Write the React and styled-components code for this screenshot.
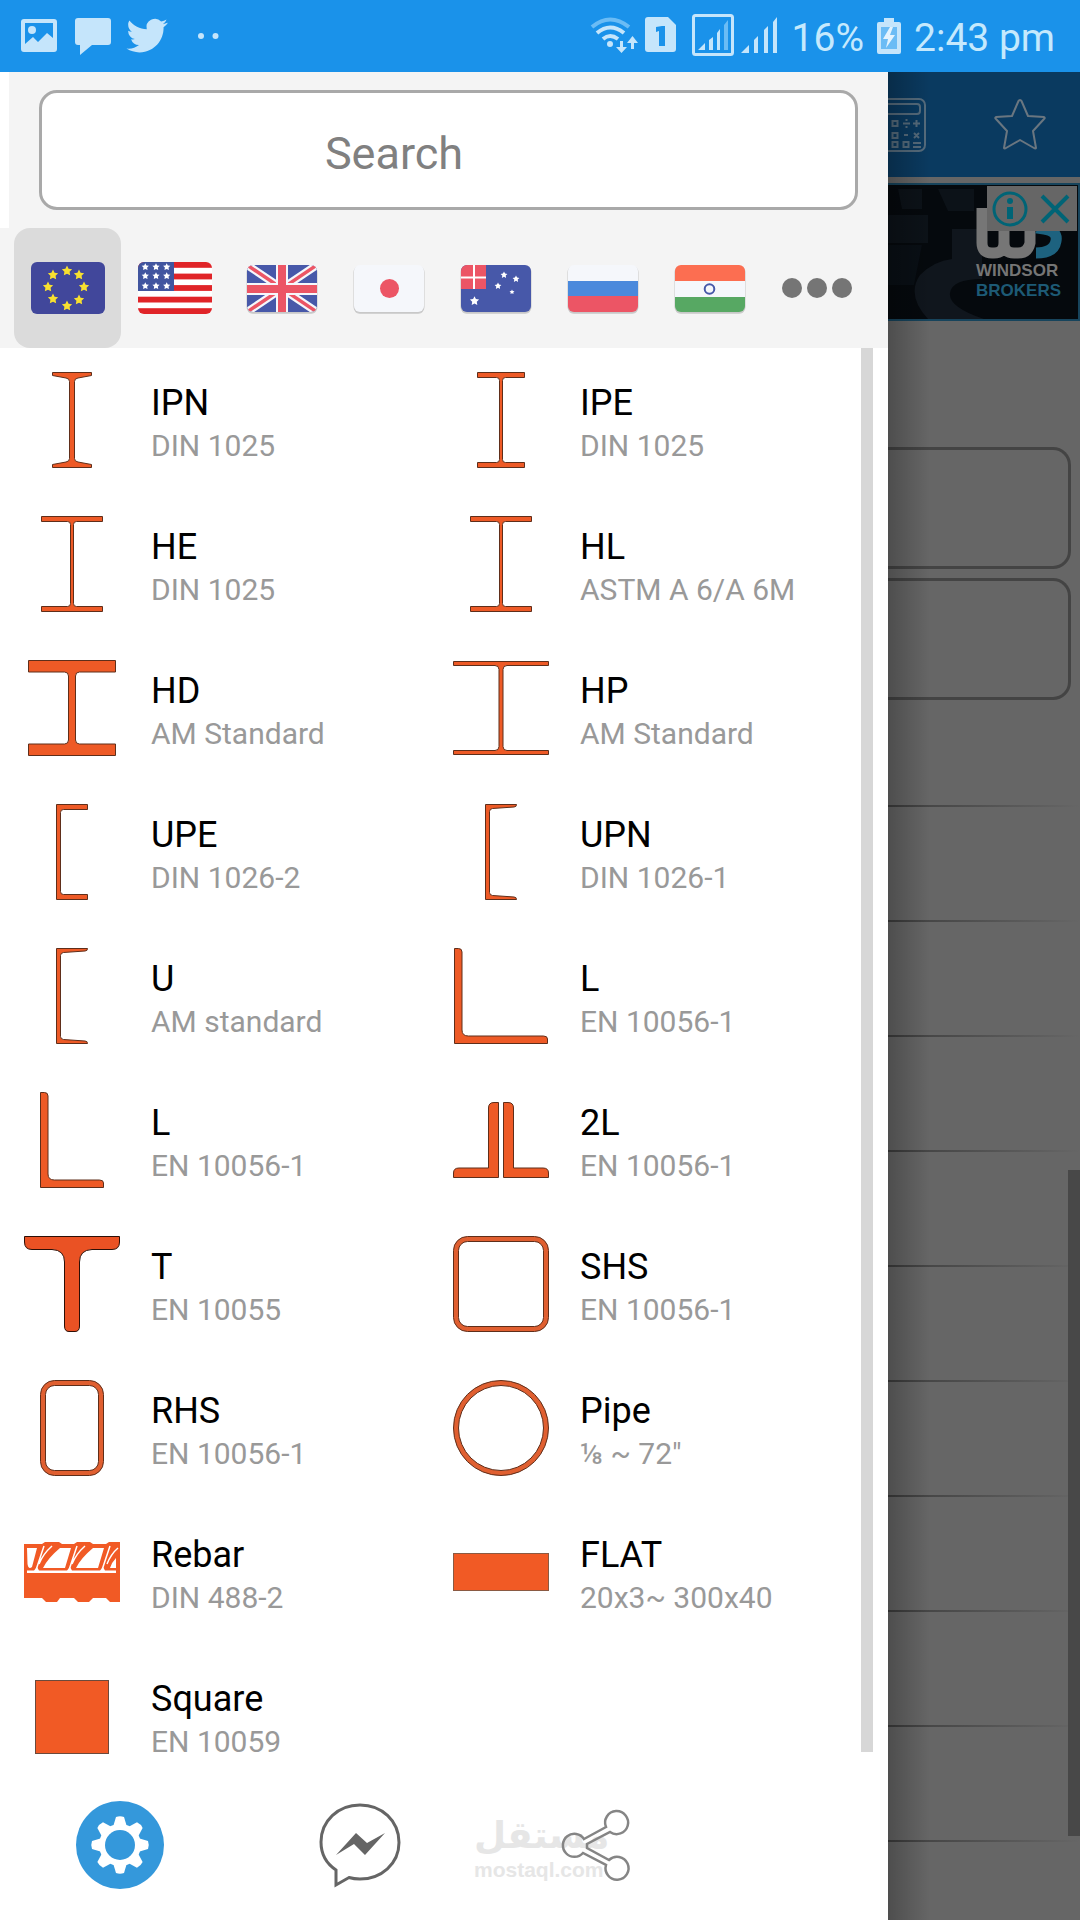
import React, { useState } from 'react';
import styled, { createGlobalStyle } from 'styled-components';

const GlobalStyle = createGlobalStyle`
  * {
    box-sizing: border-box;
  }

  body {
    margin: 0;
    background: #ffffff;
    font-family: Roboto, 'Noto Sans', sans-serif;
  }

  button {
    padding: 0;
    border: 0;
    background: none;
    font: inherit;
    cursor: pointer;
  }

  svg {
    display: block;
    flex-shrink: 0;
  }
`;

const starPoints = (cx, cy, r) =>
  Array.from({ length: 10 }, (_, i) => {
    const radius = i % 2 ? r * 0.5 : r;
    const angle = (Math.PI / 5) * i - Math.PI / 2;
    return `${(cx + radius * Math.cos(angle)).toFixed(2)},${(cy + radius * Math.sin(angle)).toFixed(2)}`;
  }).join(' ');

const Stars = ({ items, fill }) =>
  items.map(([x, y, r]) => <polygon key={`${x}-${y}`} points={starPoints(x, y, r)} fill={fill} />);

/* ---------- flags ---------- */

const EuFlag = () => (
  <svg width="74" height="52" viewBox="0 0 74 52">
    <rect width="74" height="52" rx="6" fill="#41479b" />
    <Stars
      fill="#f8e02f"
      items={[
        [36, 9, 5.4],
        [22, 13, 5.4],
        [48, 13, 5.4],
        [17, 25, 5.4],
        [53, 25, 5.4],
        [22, 37, 5.4],
        [48, 38, 5.4],
        [36, 44, 5.4],
      ]}
    />
  </svg>
);

const UsFlag = () => (
  <svg width="74" height="52" viewBox="0 0 74 52">
    <clipPath id="us">
      <rect width="74" height="52" rx="6" />
    </clipPath>
    <g clipPath="url(#us)">
      <rect width="74" height="52" fill="#ffffff" />
      {[0, 11.6, 23.1, 34.7, 46.2].map((y) => (
        <rect key={y} y={y} width="74" height="5.8" fill="#e02428" />
      ))}
      <rect width="36" height="29" fill="#41559f" />
      <Stars
        fill="#ffffff"
        items={[5, 14, 24].flatMap((y) => [7.3, 18, 28.7].map((x) => [x, y, 3.8]))}
      />
    </g>
  </svg>
);

// 70x47 flags share the same rounded body with a soft drop under it
const SmallFlag = ({ id, children }) => (
  <svg width="74" height="52" viewBox="-2 -3 74 52">
    <clipPath id={id}>
      <rect width="70" height="47" rx="6" />
    </clipPath>
    <rect x="0" y="2" width="70" height="47" rx="6" fill="#d2d2d2" />
    <rect x="-0.5" y="1" width="71" height="47" rx="6" fill="#c8c8c8" />
    <g clipPath={`url(#${id})`}>{children}</g>
  </svg>
);

const UkFlag = () => (
  <SmallFlag id="uk">
    <rect width="70" height="47" fill="#4758a9" />
    <path d="M0 0l70 47M70 0L0 47" stroke="#f5f7fb" strokeWidth="8" />
    <path d="M0 0l70 47M70 0L0 47" stroke="#ec5565" strokeWidth="3.5" />
    <path d="M35 0v47M0 24h70" stroke="#f5f7fb" strokeWidth="12" />
    <path d="M35 0v47M0 24h70" stroke="#ec5565" strokeWidth="8" />
  </SmallFlag>
);

const JpFlag = () => (
  <SmallFlag id="jp">
    <rect width="70" height="47" fill="#f5f7fb" />
    <circle cx="35.5" cy="23.5" r="9.5" fill="#ec5565" />
  </SmallFlag>
);

const AuFlag = () => (
  <SmallFlag id="au">
    <rect width="70" height="47" fill="#4758a9" />
    <rect width="25" height="24" fill="#ec5565" />
    <path d="M13 0v24M0 12.5h25" stroke="#ffffff" strokeWidth="2" />
    <Stars
      fill="#ffffff"
      items={[
        [43, 10, 3.6],
        [55, 14, 3.6],
        [37, 21, 3.6],
        [51, 27, 2.6],
        [13.5, 36, 4.8],
      ]}
    />
  </SmallFlag>
);

const RuFlag = () => (
  <SmallFlag id="ru">
    <rect width="70" height="16" fill="#f5f7fb" />
    <rect y="16" width="70" height="15" fill="#4a89dc" />
    <rect y="31" width="70" height="16" fill="#ec5565" />
  </SmallFlag>
);

const InFlag = () => (
  <SmallFlag id="in">
    <rect width="70" height="16" fill="#fc6e51" />
    <rect y="16" width="70" height="16" fill="#f5f7fb" />
    <rect y="32" width="70" height="15" fill="#57a863" />
    <circle cx="34.5" cy="24" r="4.8" fill="none" stroke="#4758a9" strokeWidth="2" />
  </SmallFlag>
);

const MoreDots = () => (
  <svg width="74" height="52" viewBox="0 0 74 52" fill="#757575">
    <circle cx="12" cy="26" r="10" />
    <circle cx="37" cy="26" r="10" />
    <circle cx="62" cy="26" r="10" />
  </svg>
);

/* ---------- steel sections, 96x96 ---------- */

const Section = ({ children, fill = '#ee5a26' }) => (
  <svg width="96" height="96" viewBox="0 0 96 96" fill={fill} stroke="#5f2e1a" strokeWidth="1">
    {children}
  </svg>
);

// symmetrical I profile: half width, flange thickness, half web, fillet
const beam = (hw, t, web, r, top = 0.5) => {
  const l = 48 - hw;
  const b = 96 - top;
  const f = top + t;
  const g = b - t;
  return `M${l} ${top}H${48 + hw}V${f}H${48 + web + r}Q${48 + web} ${f} ${48 + web} ${f + r}V${g - r}Q${48 + web} ${g} ${48 + web + r} ${g}H${48 + hw}V${b}H${l}V${g}H${48 - web - r}Q${48 - web} ${g} ${48 - web} ${g - r}V${f + r}Q${48 - web} ${f} ${48 - web - r} ${f}H${l}Z`;
};

const Beam = ({ size }) => (
  <Section>
    <path d={beam(...size)} />
  </Section>
);

const Ipn = () => (
  <Section>
    <path d="M28.500 .5H67.500V3.500L54 6Q50.500 6.500 50.500 9.500V86.500Q50.500 89.500 54 90L67.500 92.500V95.500H28.500V92.500L42 90Q45.500 89.500 45.500 86.500V9.500Q45.500 6.500 42 6L28.500 3.500Z" />
  </Section>
);

const Upe = () => (
  <Section>
    <path d="M32.500 .5H63.500V5.500H39.500Q36.500 5.500 36.500 8.500V87.500Q36.500 90.500 39.500 90.500H63.500V95.500H32.500Z" />
  </Section>
);

const Upn = () => (
  <Section>
    <path d="M32.500 .5H63.500Q63.500 3 61 3L39.500 4.500Q36.500 5 36.500 7.500V88.500Q36.500 91 39.500 91.500L61 93Q63.500 93 63.500 95.500H32.500Z" />
  </Section>
);

const Angle = ({ left = 1.5, right = 94.5 }) => (
  <Section>
    <path
      d={`M${left} .5H${left + 4}Q${left + 7.5} .5 ${left + 7.5} 4V82Q${left + 7.5} 88 ${left + 14} 88H${right - 4}Q${right} 88 ${right} 91V95.5H${left}Z`}
    />
  </Section>
);

const DoubleAngle = () => (
  <Section>
    <path d="M45.500 10.500H41Q35.500 10.500 35.500 16V76H6Q.5 76 .5 81V85.500H45.500Z" />
    <path d="M50.500 10.500H55Q60.500 10.500 60.500 16V76H90Q95.500 76 95.500 81V85.500H50.500Z" />
  </Section>
);

const Tee = () => (
  <Section fill="#ea5224">
    <path
      stroke="#2c0f06"
      d="M.5 .5H95.500V6Q95.500 13.500 88 13.500H68Q55.500 14 55.500 26V90Q55.500 95.500 51 95.500H45Q40.500 95.500 40.500 90V26Q40.500 14 28 13.500H8Q.5 13.500 .5 6Z"
    />
  </Section>
);

const Hollow = ({ x, width }) => (
  <Section fill="#e05f30">
    <rect x={x + 0.5} y=".5" width={width - 1} height="95" rx="14" />
    <rect x={x + 5.5} y="5.5" width={width - 11} height="85" rx="9" fill="#ffffff" />
  </Section>
);

const Pipe = () => (
  <Section fill="#e05f30">
    <circle cx="48" cy="48" r="47.500" />
    <circle cx="48" cy="48" r="42.500" fill="#ffffff" />
  </Section>
);

const Rebar = () => (
  <svg width="96" height="96" viewBox="0 0 96 96" fill="#f15a25">
    <path d="M0 20H18L21 18H35L38 20H50L53 18H66L69 20H82L85 18H96V78H86L82 74H69L65 78H54L50 74H36L33 78H22L18 74H0Z" />
    <path
      fill="#ffffff"
      d="M3 24H13L8 43Q4.500 46 3.500 40ZM36 24H47L41 44H19Q24 34 36 24ZM69 24H80L74 44H52Q57 34 69 24ZM92 34V44H86Q88 38 92 34Z"
    />
    <path
      fill="none"
      stroke="#ffffff"
      strokeWidth="1.500"
      d="M20 22L12 46M28 22Q19 30 15 40M53 22L45 46M61 22Q52 30 48 40M86 22L78 46M94 24Q87 30 83 40"
    />
    <path fill="#ffffff" d="M3 46.500H10L13 43L15 46.500H43L46 43L48 46.500H76L79 43L81 46.500H92V49H3Z" />
  </svg>
);

const Flat = () => (
  <Section fill="#f15a25">
    <rect x=".5" y="29.500" width="95" height="37" stroke="#8a5a43" />
  </Section>
);

const SquareBar = () => (
  <Section fill="#f15a25">
    <rect x="11.500" y="12.500" width="73" height="73" stroke="#6b4a3c" />
  </Section>
);

/* ---------- status bar drawings ---------- */

const NotificationIcons = () => (
  <svg width="200" height="40" viewBox="20 16 200 40" fill="#c5e5fb" role="img" aria-label="Notifications">
    <path
      fillRule="evenodd"
      d="M24 19H54Q57 19 57 22V49Q57 52 54 52H24Q21 52 21 49V22Q21 19 24 19ZM25 23V44L33 37L38 42L47 33L53 38V23Z"
    />
    <circle cx="32" cy="30" r="4" />
    <path d="M78 18H108Q111 18 111 21V42Q111 45 108 45H92L80 55V45H78Q75 45 75 42V21Q75 18 78 18Z" />
    <g transform="translate(126.500 15) scale(1.720)">
      <path d="M23.950 4.570a10 10 0 0 1-2.820.770 4.960 4.960 0 0 0 2.160-2.720c-.950.550-2 .950-3.130 1.180a4.920 4.920 0 0 0-8.380 4.480C7.690 8.090 4.070 6.130 1.640 3.160a4.820 4.820 0 0 0-.670 2.480c0 1.710.870 3.210 2.190 4.100a4.900 4.900 0 0 1-2.230-.620v.060a4.920 4.920 0 0 0 3.950 4.830 5 5 0 0 1-2.210.080 4.940 4.940 0 0 0 4.600 3.420A9.870 9.870 0 0 1 0 19.540a13.990 13.990 0 0 0 7.550 2.210c9.050 0 14-7.500 14-13.980 0-.210 0-.420-.020-.630a9.940 9.940 0 0 0 2.460-2.550z" />
    </g>
    <circle cx="201" cy="36" r="3" />
    <circle cx="215.500" cy="36" r="3" />
  </svg>
);

const SignalIcons = () => (
  <svg width="190" height="44" viewBox="591 14 190 44" fill="#c5e5fb" role="img" aria-label="Wi-Fi and signal">
    <g fill="none" strokeWidth="4">
      <path d="M594 27Q612 12 631 27" stroke="#6bbcf5" />
      <path d="M599 33Q612 22 626 33" stroke="#c5e5fb" />
      <path d="M605 39Q612 33 620 39" stroke="#c5e5fb" />
    </g>
    <circle cx="612" cy="44" r="3" />
    <path d="M622 41h3v6h4l-5.500 6l-5.500-6h4zM633 49h3v-6h4l-5.500-7l-5.500 7h4z" />
    <path d="M650 17H670L678 25V49Q678 52 675 52H650Q647 52 647 49V20Q647 17 650 17Z" />
    <path d="M658 27L664 26H667V46H661V31L658 32Z" fill="#1a92ea" />
    <rect x="695.500" y="15.500" width="39" height="39" rx="2" fill="none" stroke="#c5e5fb" strokeWidth="3" />
    <path d="M700 50L707 43V50ZM711 40L715 37V50H711ZM719 33L722 29V50H719Z" />
    <path d="M726 25L730 20V50H726Z" fill="#6bbcf5" />
    <path d="M743 53L751 45V53ZM756 40L760 36V53H756ZM766 30L770 26V53H766ZM775 22L779 17V53H775Z" />
  </svg>
);

const BatteryIcon = () => (
  <svg width="24" height="36" viewBox="0 0 24 36" role="img" aria-label="Battery charging">
    <path d="M7 0H17V4H22Q24 4 24 6V34Q24 36 22 36H2Q0 36 0 34V6Q0 4 2 4H7Z" fill="#c5e5fb" />
    <path d="M4 9H20V31H4Z" fill="#6bbcf5" />
    <path d="M13 9L6 21H11L9 30L18 17H13L16 9Z" fill="#e3f3fe" />
  </svg>
);

/* ---------- page behind the drawer ---------- */

const CalculatorIcon = () => (
  <svg width="54" height="54" viewBox="0 0 54 54" fill="none" stroke="#566c7d" strokeWidth="2">
    <rect x="1" y="1" width="52" height="52" rx="6" />
    <rect x="6" y="6" width="42" height="10" rx="3" />
    <path d="M20.500 23h5v5h-5zM20.500 35h5v5h-5zM20.500 44h5v5h-5zM31.500 44h5v5h-5zM31 25.500h7M41 25.500h7M44.500 22v7M32 37h4M42 35l5 5M47 35l-5 5M41 45h8M41 49h8M34.500 21v2M34.500 28v2" />
  </svg>
);

const StarIcon = () => (
  <svg width="52" height="52" viewBox="0 0 52 52" fill="none" stroke="#6a7680" strokeWidth="2" strokeLinejoin="round">
    <path d="M26 1Q27 1 27.500 2L34 17L50 18Q51.500 19 50 20L39 32L42 49Q41.500 50 40 49L26 41L12 49Q10.500 50 10 49L13 32L2 20Q.500 19 2 18L18 17L24.500 2Q25 1 26 1Z" />
  </svg>
);

const AdInfoIcon = () => (
  <svg width="36" height="36" viewBox="0 0 36 36">
    <circle cx="18" cy="18" r="16" fill="none" stroke="#006476" strokeWidth="3" />
    <path d="M15 16h6v12h-6z" fill="#006476" />
    <circle cx="18" cy="10" r="3" fill="#006476" />
  </svg>
);

const AdCloseIcon = () => (
  <svg width="36" height="36" viewBox="0 0 36 36">
    <path d="M5 5l26 26M31 5L5 31" stroke="#006476" strokeWidth="4" />
  </svg>
);

const AdPattern = () => (
  <svg width="100%" height="100%" viewBox="0 0 190 134" preserveAspectRatio="none">
    <rect width="190" height="134" fill="#05090d" />
    <path d="M10 4h24v20H14zM50 4h36v22H60zM0 30h40v28H0z" fill="#0c1218" />
    <path d="M64 44h30v50q-30 0-32 14t34 26H40q-22-24-8-44 14-14 32-16z" fill="#10161d" />
    <path d="M0 60h34l-8 40H0z" fill="#090f15" />
  </svg>
);

const BrandMark = () => (
  <svg width="86" height="56" viewBox="0 0 86 56" fill="none" strokeWidth="11">
    <path d="M6 3V38Q6 48 16 48H18Q28 48 28 38V14V38Q28 48 38 48H42Q52 48 54 38V14" stroke="#767676" />
    <path d="M60 4H80L68 24Q82 26 80 36Q78 48 60 48" stroke="#1d627f" />
  </svg>
);

/* ---------- bottom actions ---------- */

const GearIcon = () => (
  <svg width="88" height="88" viewBox="0 0 88 88">
    <circle cx="44" cy="44" r="44" fill="#3498db" />
    <g fill="#ffffff">
      {[0, 45, 90, 135, 180, 225, 270, 315].map((deg) => (
        <path key={deg} transform={`rotate(${deg} 44 44)`} d="M37 26L40 16Q44 14.500 48 16L51 26Z" />
      ))}
      <circle cx="44" cy="44" r="21" />
    </g>
    <circle cx="44" cy="44" r="15" fill="#3498db" />
  </svg>
);

const MessengerIcon = () => (
  <svg width="88" height="88" viewBox="-2 0 88 88">
    <path
      d="M44 4C66 4 83 20 83 41.500C83 63 65 78 44 78Q38 78 33 76.500L20 84V69Q5 59 5 41C5 20 22 4 44 4Z"
      fill="none"
      stroke="#656565"
      strokeWidth="3"
    />
    <path d="M20 54L40 32L51 42L69 32L49 54L38 43Z" fill="#656565" />
  </svg>
);

const ShareIcon = () => (
  <svg width="88" height="88" viewBox="0 0 88 88">
    <path
      d="M32 38L54 26A11.500 11.500 0 1 1 58 31L35 43V47L57 59A11.500 11.500 0 1 1 54 64L31 52A11.500 11.500 0 1 1 32 38Z"
      fill="none"
      stroke="#858585"
      strokeWidth="2.500"
    />
  </svg>
);

const countries = [
  { name: 'Europe', Flag: EuFlag },
  { name: 'United States', Flag: UsFlag },
  { name: 'United Kingdom', Flag: UkFlag },
  { name: 'Japan', Flag: JpFlag },
  { name: 'Australia', Flag: AuFlag },
  { name: 'Russia', Flag: RuFlag },
  { name: 'India', Flag: InFlag },
  { name: 'More', Flag: MoreDots },
];

const sections = [
  { title: 'IPN', norm: 'DIN 1025', icon: <Ipn /> },
  { title: 'IPE', norm: 'DIN 1025', icon: <Beam size={[23.5, 5, 1.5, 3]} /> },
  { title: 'HE', norm: 'DIN 1025', icon: <Beam size={[30.5, 5, 1.5, 3]} /> },
  { title: 'HL', norm: 'ASTM A 6/A 6M', icon: <Beam size={[30.5, 5, 1.5, 3]} /> },
  { title: 'HD', norm: 'AM Standard', icon: <Beam size={[43.5, 11.5, 3.5, 4]} /> },
  { title: 'HP', norm: 'AM Standard', icon: <Beam size={[47.5, 4, 2, 4, 1.5]} /> },
  { title: 'UPE', norm: 'DIN 1026-2', icon: <Upe /> },
  { title: 'UPN', norm: 'DIN 1026-1', icon: <Upn /> },
  { title: 'U', norm: 'AM standard', icon: <Upn /> },
  { title: 'L', norm: 'EN 10056-1', icon: <Angle /> },
  { title: 'L', norm: 'EN 10056-1', icon: <Angle left={16.5} right={79.5} /> },
  { title: '2L', norm: 'EN 10056-1', icon: <DoubleAngle /> },
  { title: 'T', norm: 'EN 10055', icon: <Tee /> },
  { title: 'SHS', norm: 'EN 10056-1', icon: <Hollow x={0} width={96} /> },
  { title: 'RHS', norm: 'EN 10056-1', icon: <Hollow x={16} width={64} /> },
  { title: 'Pipe', norm: '⅛ ~ 72"', icon: <Pipe /> },
  { title: 'Rebar', norm: 'DIN 488-2', icon: <Rebar /> },
  { title: 'FLAT', norm: '20x3~ 300x40', icon: <Flat /> },
  { title: 'Square', norm: 'EN 10059', icon: <SquareBar /> },
];

const App = () => {
  const [country, setCountry] = useState('Europe');

  return (
    <Page>
      <GlobalStyle />
      <StatusBar>
        <NotificationIcons />
        <StatusGroup>
          <SignalIcons />
          <StatusText>16%</StatusText>
          <BatteryIcon />
          <StatusText>2:43 pm</StatusText>
        </StatusGroup>
      </StatusBar>
      <Body>
        <Drawer>
          <SearchBar>
            <SearchInput type="text" placeholder="Search" aria-label="Search" />
          </SearchBar>
          <Countries>
            {countries.map(({ name, Flag }) => (
              <CountryButton
                key={name}
                type="button"
                aria-label={name}
                aria-pressed={country === name}
                $active={country === name}
                onClick={() => setCountry(name)}
              >
                <Flag />
              </CountryButton>
            ))}
          </Countries>
          <ListArea>
            <SectionList>
              {sections.map(({ title, norm, icon }, i) => (
                <li key={i}>
                  <SectionButton type="button">
                    {icon}
                    <SectionText>
                      <SectionTitle>{title}</SectionTitle>
                      <SectionNorm>{norm}</SectionNorm>
                    </SectionText>
                  </SectionButton>
                </li>
              ))}
            </SectionList>
            <ListScroll />
          </ListArea>
          <Footer>
            <Watermark>
              <WatermarkName lang="ar" dir="rtl">
                مستقل
              </WatermarkName>
              <WatermarkUrl>mostaql.com</WatermarkUrl>
            </Watermark>
            <FooterButton type="button" aria-label="Settings">
              <GearIcon />
            </FooterButton>
            <FooterButton type="button" aria-label="Messenger">
              <MessengerIcon />
            </FooterButton>
            <FooterButton type="button" aria-label="Share">
              <ShareIcon />
            </FooterButton>
          </Footer>
        </Drawer>
        <Behind>
          <Toolbar>
            <CalculatorIcon />
            <StarIcon />
          </Toolbar>
          <Ad>
            <AdBackground>
              <AdPattern />
            </AdBackground>
            <AdBrand>
              <BrandMark />
              <AdWord>WINDSOR</AdWord>
              <AdWord $blue>BROKERS</AdWord>
            </AdBrand>
            <AdChoices>
              <AdInfoIcon />
              <AdCloseIcon />
            </AdChoices>
          </Ad>
          <Fields>
            <Field />
            <Field />
          </Fields>
          <Lines>
            {Array.from({ length: 10 }, (_, i) => (
              <Line key={i} />
            ))}
          </Lines>
          <BehindScroll />
          <DrawerShadow />
        </Behind>
      </Body>
    </Page>
  );
};

const Page = styled.div`
  display: flex;
  flex-direction: column;
  min-height: 100vh;
`;

const StatusBar = styled.header`
  display: flex;
  align-items: center;
  justify-content: space-between;
  height: 72px;
  padding: 0 25px 0 20px;
  background: #1a92ea;
`;

const StatusGroup = styled.div`
  display: flex;
  align-items: center;
  gap: 13px;
`;

const StatusText = styled.span`
  padding-top: 3px;
  font-size: 39px;
  line-height: 48px;
  white-space: nowrap;
  color: #c5e9fd;
`;

const Body = styled.div`
  display: flex;
  flex: 1;
`;

const Drawer = styled.aside`
  display: flex;
  flex: 1;
  flex-direction: column;
  min-width: 0;
  background: #ffffff;
`;

const SearchBar = styled.div`
  margin-left: 9px;
  padding: 18px 30px;
  background: #f4f4f4;
`;

const SearchInput = styled.input`
  display: block;
  width: 100%;
  height: 120px;
  padding: 6px 109px 0 0;
  border: 3px solid #a9a9a9;
  border-radius: 18px;
  background: #ffffff;
  color: #000000;
  font-family: inherit;
  font-size: 45px;
  text-align: center;

  &::placeholder {
    color: #808080;
    opacity: 1;
  }
`;

const Countries = styled.nav`
  display: flex;
  padding: 0 18px 0 14px;
  background: #f4f4f4;
`;

const CountryButton = styled.button`
  display: flex;
  flex: 1;
  align-items: center;
  justify-content: center;
  height: 120px;
  border-radius: 16px;
  background: ${(props) => (props.$active ? '#dbdbdb' : 'transparent')};
`;

const ListArea = styled.main`
  display: flex;
  padding-right: 15px;
`;

const SectionList = styled.ul`
  display: grid;
  flex: 1;
  grid-template-columns: 1fr 1fr;
  row-gap: 48px;
  margin: 0;
  padding: 24px 3px 0 0;
  list-style: none;
`;

const SectionButton = styled.button`
  display: flex;
  align-items: center;
  gap: 31px;
  width: 100%;
  height: 96px;
  padding-left: 24px;
  text-align: left;
`;

const SectionText = styled.span`
  display: flex;
  flex-direction: column;
  padding-top: 6px;
`;

const SectionTitle = styled.span`
  font-size: 36px;
  line-height: 46px;
  color: #000000;
`;

const SectionNorm = styled.span`
  font-size: 30px;
  line-height: 40px;
  color: #999999;
`;

const ListScroll = styled.div`
  width: 12px;
  margin-bottom: 12px;
  background: #d7d7d7;
`;

const Footer = styled.footer`
  position: relative;
  display: flex;
  flex: 1;
  align-items: center;
  gap: 150px;
  min-height: 156px;
  padding: 6px 76px 0;
`;

const FooterButton = styled.button`
  position: relative;
`;

const Watermark = styled.div`
  position: absolute;
  top: 50px;
  left: 474px;
  color: #e6e6e6;
  font-weight: 700;
`;

const WatermarkName = styled.div`
  font-family: 'DejaVu Sans', sans-serif;
  font-size: 37px;
  line-height: 44px;
  text-align: left;
`;

const WatermarkUrl = styled.div`
  font-family: 'Liberation Sans', sans-serif;
  font-size: 21px;
  line-height: 24px;
`;

const Behind = styled.section`
  position: relative;
  display: flex;
  flex: 0 0 192px;
  flex-direction: column;
  overflow: hidden;
  background: #666666;
`;

const Toolbar = styled.div`
  display: flex;
  align-items: center;
  justify-content: flex-end;
  gap: 68px;
  height: 105px;
  padding-right: 34px;
  background: #0a3a60;
`;

const Ad = styled.div`
  position: relative;
  height: 138px;
  margin-top: 6px;
  border: 2px solid #17445c;
  border-left: 0;
`;

const AdBackground = styled.div`
  height: 100%;
`;

const AdBrand = styled.div`
  position: absolute;
  right: 14px;
  bottom: 18px;
  width: 88px;
`;

const AdWord = styled.div`
  font-family: 'Liberation Sans', sans-serif;
  font-size: 17px;
  font-weight: 700;
  line-height: 20px;
  color: ${(props) => (props.$blue ? '#1d5a75' : '#757575')};
`;

const AdChoices = styled.div`
  position: absolute;
  top: 1px;
  right: 1px;
  display: flex;
  align-items: center;
  justify-content: space-around;
  width: 90px;
  height: 45px;
  background: #666666;
`;

const Fields = styled.div`
  display: grid;
  gap: 9px;
  margin-top: 126px;
  padding-right: 9px;
`;

const Field = styled.div`
  height: 122px;
  border: 3px solid #444444;
  border-left: 0;
  border-radius: 0 18px 18px 0;
`;

const Lines = styled.div`
  display: flex;
  flex: 1;
  flex-direction: column;
  margin-top: 105px;
`;

const Line = styled.div`
  height: 115px;
  background: linear-gradient(to right, #3e3e3e, #666666) top / 100% 2px no-repeat;

  &:last-child {
    flex: 1;
    height: auto;
  }
`;

const BehindScroll = styled.div`
  position: absolute;
  top: 1098px;
  right: 0;
  width: 12px;
  height: 666px;
  background: #484848;
`;

const DrawerShadow = styled.div`
  position: absolute;
  top: 0;
  bottom: 0;
  left: 0;
  width: 42px;
  background: linear-gradient(to right, rgba(0, 0, 0, 0.24), rgba(0, 0, 0, 0));
`;

export default App;
